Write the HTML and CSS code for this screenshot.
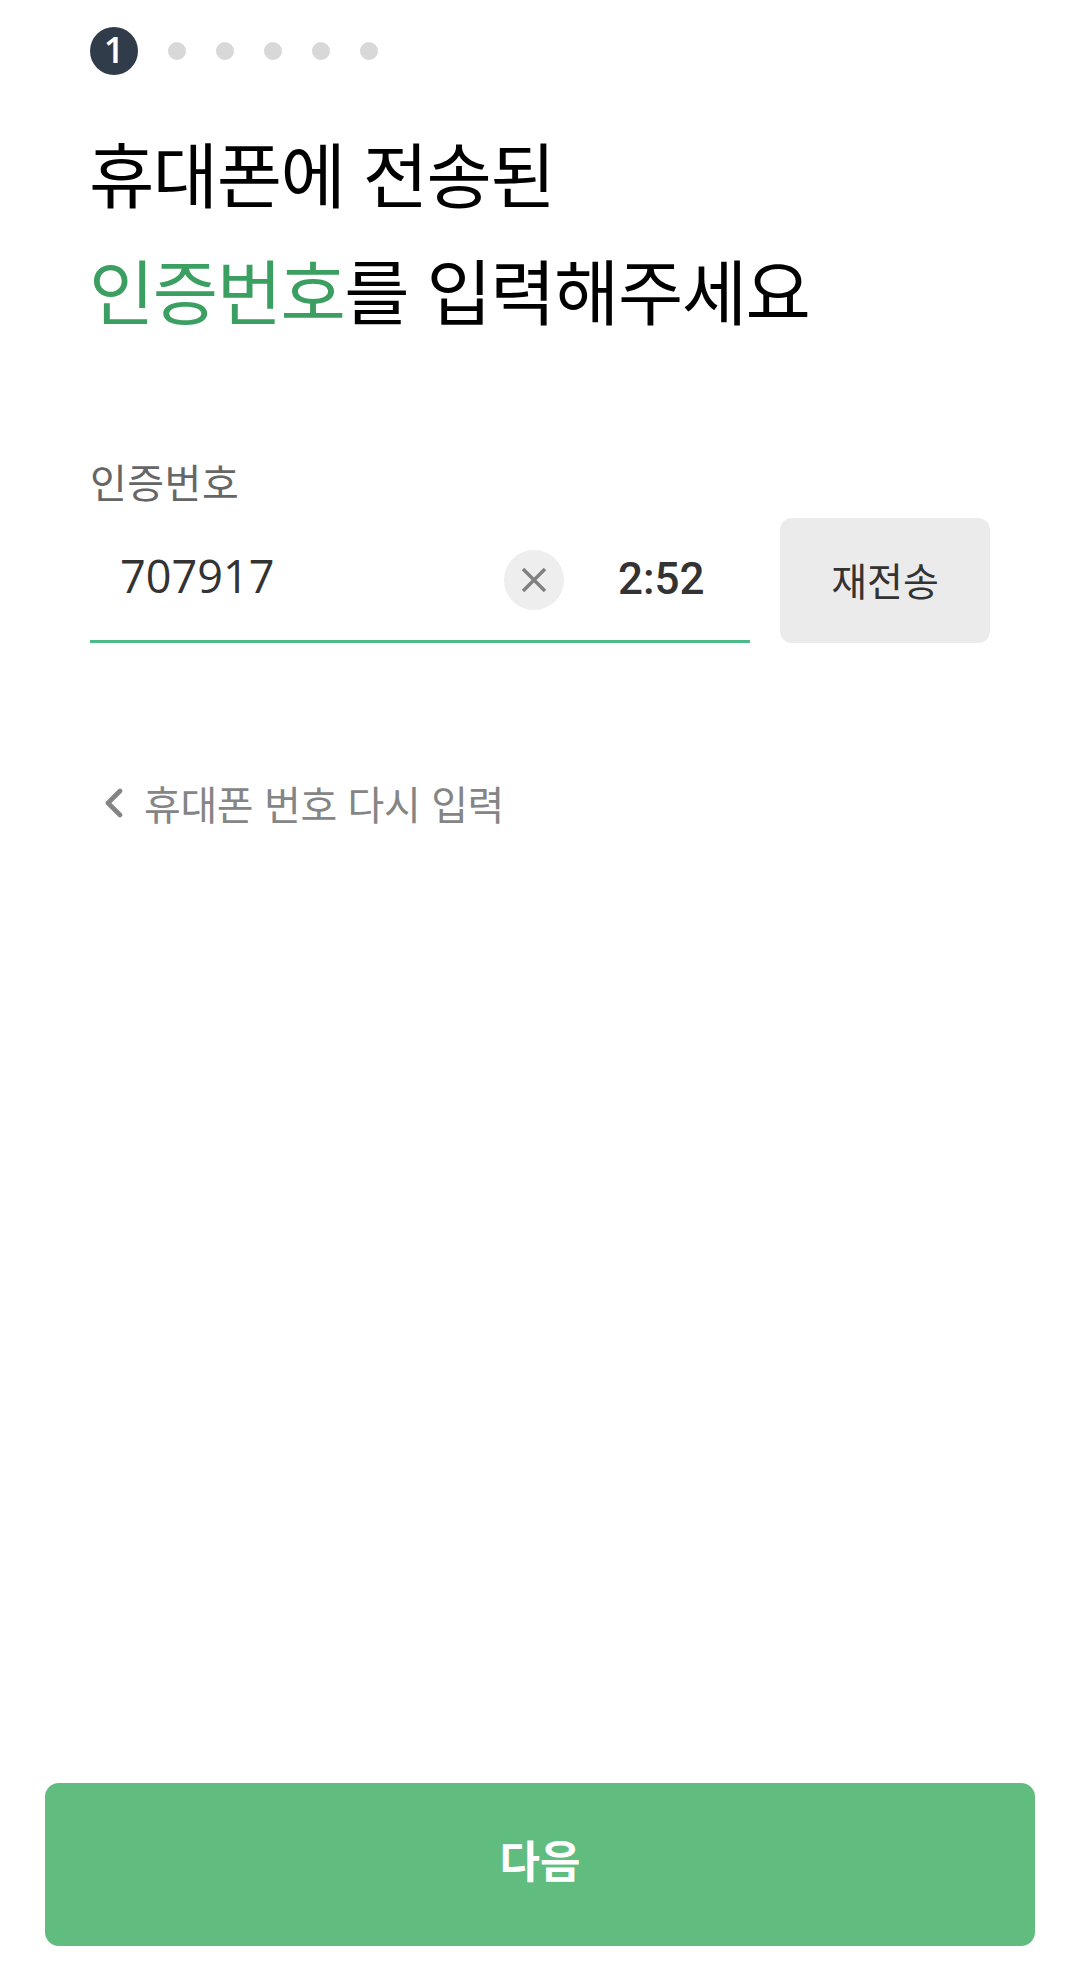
FILE: index.html
```html
<!DOCTYPE html>
<html lang="ko">
<head>
    <meta charset="UTF-8">
    <meta name="viewport" content="width=device-width, initial-scale=1.0">
    <title>인증번호 입력</title>
    <link rel="stylesheet" href="styles.css">
</head>
<body>
    <div class="page">
        <div class="steps">
            <span class="step-current">1</span>
            <span class="step-dot"></span>
            <span class="step-dot"></span>
            <span class="step-dot"></span>
            <span class="step-dot"></span>
            <span class="step-dot"></span>
        </div>

        <h1 class="title">휴대폰에 전송된<br><em>인증번호</em>를 입력해주세요</h1>

        <label class="field-label">인증번호</label>
        <div class="field-row">
            <div class="field">
                <span class="field-value">707917</span>
                <span class="clear">
                    <svg width="26" height="26" viewBox="0 0 26 26">
                        <path d="M2 2L24 24M24 2L2 24" stroke="#808080" stroke-width="3.4" fill="none"/>
                    </svg>
                </span>
                <span class="timer">2:52</span>
            </div>
            <button class="resend" type="button">재전송</button>
        </div>

        <a class="back-link">
            <svg width="20" height="30" viewBox="0 0 20 30">
                <path d="M16 3L4 15L16 27" stroke="#858585" stroke-width="4.6" stroke-linecap="round" stroke-linejoin="round" fill="none"/>
            </svg>
            휴대폰 번호 다시 입력
        </a>

        <button class="next" type="button">다음</button>
    </div>
</body>
</html>
```

FILE: styles.css
```css
html, body {
    margin: 0;
    padding: 0;
    background: #fff;
}
body {
    font-family: "Noto Sans CJK KR", "Noto Sans", sans-serif;
}
.page {
    display: flex;
    flex-direction: column;
    box-sizing: border-box;
    height: 1981px;
    padding: 27px 45px 35px;
}
.steps {
    display: flex;
    align-items: center;
    gap: 30px;
    margin-left: 45px;
}
.step-current {
    display: flex;
    align-items: center;
    justify-content: center;
    box-sizing: border-box;
    width: 48px;
    height: 48px;
    padding-bottom: 3px;
    border-radius: 50%;
    background: #303c4a;
    color: #fff;
    font-family: "Open Sans", sans-serif;
    font-size: 36px;
    font-weight: 600;
}
.step-dot {
    width: 18px;
    height: 18px;
    border-radius: 50%;
    background: #d8d8d8;
}
.title {
    margin: 38px 0 0 44px;
    font-size: 71px;
    font-weight: 400;
    line-height: 117px;
    letter-spacing: -1.5px;
    color: #000;
}
.title em {
    font-style: normal;
    color: #3c9f62;
}
.field-label {
    margin: 104px 0 0 45px;
    font-size: 40px;
    line-height: 60px;
    letter-spacing: 0.5px;
    color: #666;
}
.field-row {
    display: flex;
    gap: 30px;
    margin: 7px 0 0 45px;
}
.field {
    display: flex;
    align-items: center;
    box-sizing: border-box;
    width: 660px;
    height: 125px;
    padding-left: 30px;
    border-bottom: 3px solid #4dbb88;
}
.field-value {
    flex: 1;
    margin-top: -8px;
    font-family: "Open Sans", sans-serif;
    font-size: 45px;
    color: #333;
}
.clear {
    display: flex;
    align-items: center;
    justify-content: center;
    width: 60px;
    height: 60px;
    margin-top: 2px;
    border-radius: 50%;
    background: #eee;
}
.timer {
    width: 84px;
    margin: 0 48px 0 54px;
    font-family: Roboto, sans-serif;
    font-size: 44px;
    font-weight: 500;
    color: #333;
}
.resend {
    width: 210px;
    height: 125px;
    padding: 0 0 4px;
    border: 0;
    border-radius: 12px;
    background: #ebebeb;
    color: #333;
    font-family: inherit;
    font-size: 39px;
}
.back-link {
    display: flex;
    align-items: center;
    gap: 20px;
    margin: 130px 0 0 59px;
    font-size: 40px;
    line-height: 60px;
    letter-spacing: -0.4px;
    color: #858585;
}
.next {
    width: 990px;
    height: 163px;
    margin-top: auto;
    padding: 0 0 12px;
    border: 0;
    border-radius: 14px;
    background: #60bc7f;
    color: #fff;
    font-family: inherit;
    font-size: 44px;
    font-weight: 700;
}
```
